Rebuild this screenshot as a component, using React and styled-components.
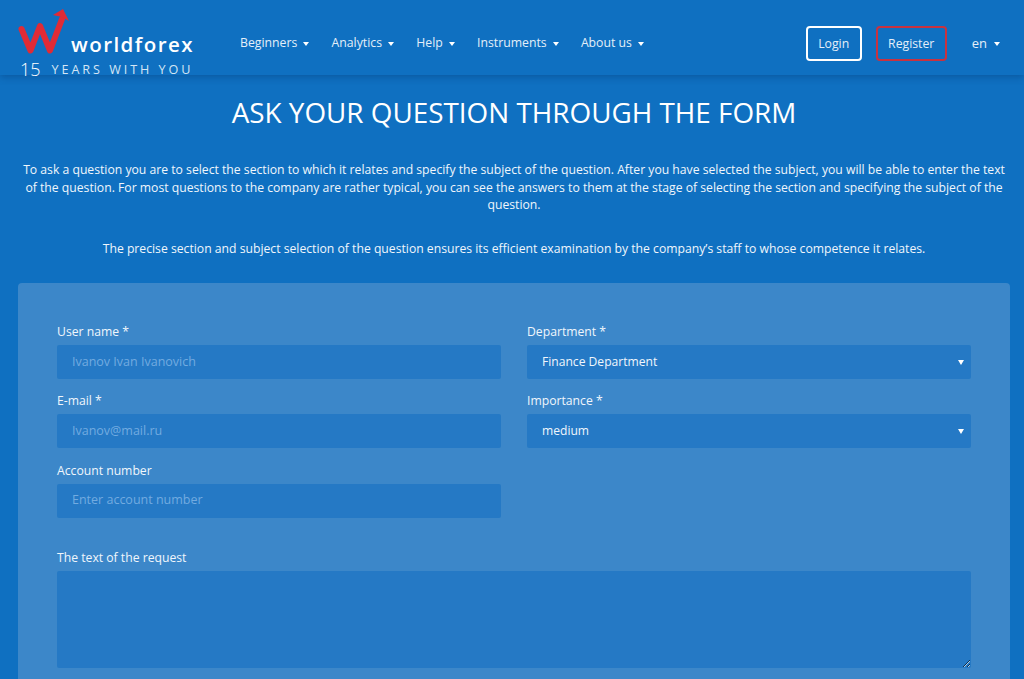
import React from 'react';
import styled, { createGlobalStyle } from 'styled-components';

const Global = createGlobalStyle`
  html, body { margin: 0; padding: 0; height: 679px; overflow: hidden; }
  body { background: #0f70c1; color: #fff; font-family: "Open Sans", "Liberation Sans", sans-serif; font-size: 13px; }
  * { box-sizing: border-box; }
`;

const Header = styled.header`
  height: 75px;
  display: flex;
  align-items: center;
  padding: 0 25px 0 18px;
  background: #0f70c1;
  box-shadow: 0 2px 7px rgba(5, 60, 120, 0.45);
  position: relative;
`;
const Logo = styled.a`
  width: 178px;
  height: 75px;
  flex: none;
  display: grid;
  grid-template-columns: 54px 1fr;
  grid-template-rows: 55px 20px;
  color: #fff;
`;
const LogoMark = styled.svg`
  width: 54px;
  height: 55px;
  display: block;
`;
const LogoName = styled.span`
  font-size: 20.5px;
  font-weight: 600;
  letter-spacing: 1.45px;
  line-height: 26px;
  align-self: end;
  margin: 0 0 -2px -1px;
  white-space: nowrap;
`;
const Tagline = styled.div`
  grid-column: 1 / 3;
  display: flex;
  align-items: center;
  height: 20px;
  margin: 4px 0 0 2px;
  white-space: nowrap;
  color: #d5e6f5;
`;
const Fifteen = styled.span`
  font-size: 18px;
  font-weight: 300;
  width: 31.5px;
  color: #fff;
`;
const Years = styled.span`
  font-size: 12.6px;
  letter-spacing: 2.95px;
`;
const Nav = styled.nav`
  display: flex;
  gap: 22.25px;
  margin-left: 44px;
  margin-top: 11px;
`;
const Caret = styled.i`
  display: inline-block;
  width: 0;
  height: 0;
  margin-left: ${p => p.$gap || 6}px;
  vertical-align: middle;
  border-top: 4px solid #fff;
  border-left: 3.5px solid transparent;
  border-right: 3.5px solid transparent;
`;
const NavLink = styled.a`
  color: #e4eff9;
  font-size: 12.25px;
  line-height: 18px;
  white-space: nowrap;
`;
const Actions = styled.div`
  margin-left: auto;
  display: flex;
  align-items: center;
  margin-top: 12px;
`;
const AuthButton = styled.a`
  height: 35px;
  display: flex;
  align-items: center;
  justify-content: center;
  width: ${p => p.$w}px;
  margin-right: ${p => p.$mr}px;
  border: 2px solid ${p => p.$border};
  border-radius: 4px;
  color: #e4eff9;
  font-size: 12.25px;
`;
const Lang = styled.span`
  color: #e4eff9;
  font-size: 13px;
  margin: -2px -1px 0 1px;
`;
const Main = styled.main`
  padding: 0 14px 0 18px;
`;
const Title = styled.h1`
  margin: 20px 0 0;
  text-align: center;
  font-size: 27.85px;
  line-height: 34px;
  font-weight: 400;
  color: #fff;
`;
const Intro = styled.p`
  margin: ${p => p.$mt}px 0 0;
  text-align: center;
  font-size: 12.2px;
  line-height: 17.5px;
  color: #f0f6fc;
`;
const Panel = styled.form`
  margin-top: 26px;
  padding: 41px 39px 40px;
  background: #3c87c9;
  border-radius: 4px 4px 0 0;
  height: 420px;
`;
const Grid = styled.div`
  display: grid;
  grid-template-columns: 444px 444px;
  column-gap: 26px;
  row-gap: 14.3px;
`;
const Field = styled.label`
  display: block;
  grid-column: ${p => p.$col};
`;
const FieldLabel = styled.span`
  display: block;
  height: 16px;
  margin-bottom: 5px;
  font-size: 12.2px;
  line-height: 16px;
  color: #f0f6fc;
`;
const InputBox = styled.input`
  display: block;
  width: 100%;
  height: 34px;
  padding: 0 15px 2px;
  border: 0;
  border-radius: 2px;
  background: #2579c5;
  color: #fff;
  font: 12.5px "Open Sans", sans-serif;
  outline: 0;
  &::placeholder { color: #72abe0; opacity: 1; }
`;
const SelectBox = styled.div`
  height: 34px;
  padding: 0 15px 2px;
  display: flex;
  align-items: center;
  justify-content: space-between;
  border-radius: 2px;
  background: #2579c5;
  color: #f0f6fc;
  font-size: 12.1px;
`;
const SelectCaret = styled(Caret)`
  margin: 3px -8px 0 0;
  border-top-width: 5px;
`;
const TextareaLabel = styled(FieldLabel)`
  margin-top: 32px;
`;
const TextareaBox = styled.textarea`
  display: block;
  width: 914px;
  height: 97px;
  border: 0;
  border-radius: 2px;
  background: #2579c5;
  outline: 0;
  resize: vertical;
`;

const nav = ['Beginners', 'Analytics', 'Help', 'Instruments', 'About us'];

export default function App() {
  return (
    <>
      <Global />
      <Header>
        <Logo>
          <LogoMark viewBox="0 0 54 55">
            <path d="M3.5 29 L12.5 50.5 L22 26 L32 50.5 L44 19" fill="none" stroke="#e02b36" strokeWidth="6" strokeLinecap="round" strokeLinejoin="round" />
            <path d="M35 15 L45 9 L51 21 L44 17 Z" fill="#e02b36" />
          </LogoMark>
          <LogoName>worldforex</LogoName>
          <Tagline><Fifteen>15</Fifteen><Years>YEARS WITH YOU</Years></Tagline>
        </Logo>
        <Nav>
          {nav.map(n => <NavLink key={n}>{n}<Caret /></NavLink>)}
        </Nav>
        <Actions>
          <AuthButton $w={56} $mr={14} $border="#fff">Login</AuthButton>
          <AuthButton $w={71} $mr={24} $border="#c9323f">Register</AuthButton>
          <Lang>en<Caret $gap={7} /></Lang>
        </Actions>
      </Header>
      <Main>
        <Title>ASK YOUR QUESTION THROUGH THE FORM</Title>
        <Intro $mt={32}>To ask a question you are to select the section to which it relates and specify the subject of the question. After you have selected the subject, you will be able to enter the text of the question. For most questions to the company are rather typical, you can see the answers to them at the stage of selecting the section and specifying the subject of the question.</Intro>
        <Intro $mt={26}>The precise section and subject selection of the question ensures its efficient examination by the company’s staff to whose competence it relates.</Intro>
        <Panel>
          <Grid>
            <Field $col="1">
              <FieldLabel>User name *</FieldLabel>
              <InputBox placeholder="Ivanov Ivan Ivanovich" />
            </Field>
            <Field $col="2">
              <FieldLabel>Department *</FieldLabel>
              <SelectBox>Finance Department<SelectCaret /></SelectBox>
            </Field>
            <Field $col="1">
              <FieldLabel>E-mail *</FieldLabel>
              <InputBox placeholder="Ivanov@mail.ru" />
            </Field>
            <Field $col="2">
              <FieldLabel>Importance *</FieldLabel>
              <SelectBox>medium<SelectCaret /></SelectBox>
            </Field>
            <Field $col="1">
              <FieldLabel>Account number</FieldLabel>
              <InputBox placeholder="Enter account number" />
            </Field>
          </Grid>
          <TextareaLabel>The text of the request</TextareaLabel>
          <TextareaBox />
        </Panel>
      </Main>
    </>
  );
}
